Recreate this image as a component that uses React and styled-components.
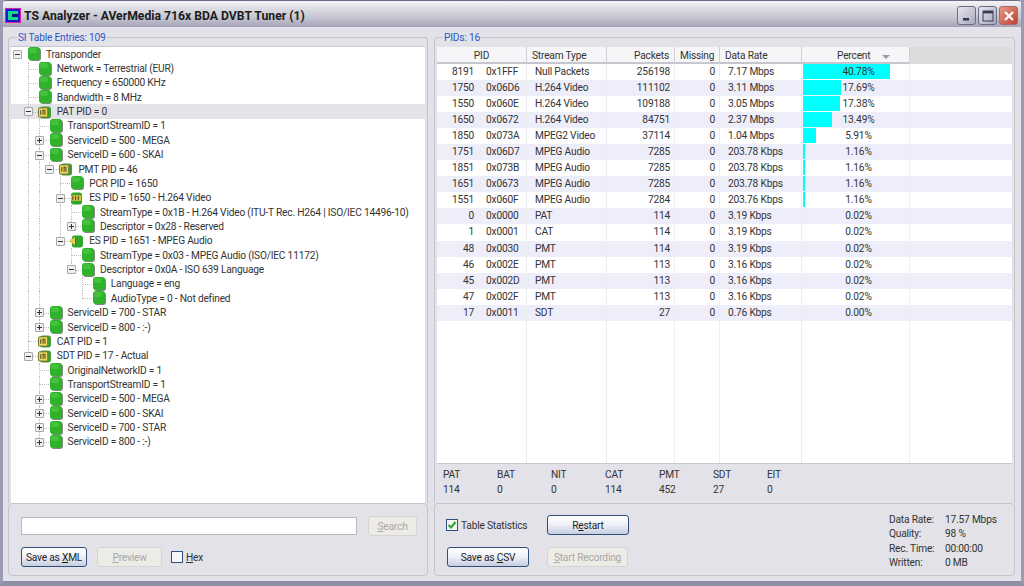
import styled, { createGlobalStyle } from 'styled-components'

const GlobalStyle = createGlobalStyle`
	html, body {
		margin: 0;
		padding: 0;
		background: #e2e2e8;
	}
	* {
		box-sizing: border-box;
	}
`

// level, icon, text, expander ('-', '+' or nothing)
const treeRows = [
	[0, 'green', 'Transponder', '-'],
	[1, 'green', 'Network = Terrestrial (EUR)'],
	[1, 'green', 'Frequency = 650000 KHz'],
	[1, 'green', 'Bandwidth = 8 MHz'],
	[1, 'table', 'PAT PID = 0', '-', 'selected'],
	[2, 'green', 'TransportStreamID = 1'],
	[2, 'green', 'ServiceID = 500 - MEGA', '+'],
	[2, 'green', 'ServiceID = 600 - SKAI', '-'],
	[3, 'table', 'PMT PID = 46', '-'],
	[4, 'green', 'PCR PID = 1650'],
	[4, 'video', 'ES PID = 1650 - H.264 Video', '-'],
	[5, 'green', 'StreamType = 0x1B - H.264 Video (ITU-T Rec. H264 | ISO/IEC 14496-10)'],
	[5, 'green', 'Descriptor = 0x28 - Reserved', '+'],
	[4, 'audio', 'ES PID = 1651 - MPEG Audio', '-'],
	[5, 'green', 'StreamType = 0x03 - MPEG Audio (ISO/IEC 11172)'],
	[5, 'green', 'Descriptor = 0x0A - ISO 639 Language', '-'],
	[6, 'green', 'Language = eng'],
	[6, 'green', 'AudioType = 0 - Not defined'],
	[2, 'green', 'ServiceID = 700 - STAR', '+'],
	[2, 'green', 'ServiceID = 800 - :-)', '+'],
	[1, 'table', 'CAT PID = 1'],
	[1, 'table', 'SDT PID = 17 - Actual', '-'],
	[2, 'green', 'OriginalNetworkID = 1'],
	[2, 'green', 'TransportStreamID = 1'],
	[2, 'green', 'ServiceID = 500 - MEGA', '+'],
	[2, 'green', 'ServiceID = 600 - SKAI', '+'],
	[2, 'green', 'ServiceID = 700 - STAR', '+'],
	[2, 'green', 'ServiceID = 800 - :-)', '+']
]

const pids = [
	[8191, '0x1FFF', 'Null Packets', 256198, '7.17 Mbps', 40.78],
	[1750, '0x06D6', 'H.264 Video', 111102, '3.11 Mbps', 17.69],
	[1550, '0x060E', 'H.264 Video', 109188, '3.05 Mbps', 17.38],
	[1650, '0x0672', 'H.264 Video', 84751, '2.37 Mbps', 13.49],
	[1850, '0x073A', 'MPEG2 Video', 37114, '1.04 Mbps', 5.91],
	[1751, '0x06D7', 'MPEG Audio', 7285, '203.78 Kbps', 1.16],
	[1851, '0x073B', 'MPEG Audio', 7285, '203.78 Kbps', 1.16],
	[1651, '0x0673', 'MPEG Audio', 7285, '203.78 Kbps', 1.16],
	[1551, '0x060F', 'MPEG Audio', 7284, '203.76 Kbps', 1.16],
	[0, '0x0000', 'PAT', 114, '3.19 Kbps', 0.02],
	[1, '0x0001', 'CAT', 114, '3.19 Kbps', 0.02],
	[48, '0x0030', 'PMT', 114, '3.19 Kbps', 0.02],
	[46, '0x002E', 'PMT', 113, '3.16 Kbps', 0.02],
	[45, '0x002D', 'PMT', 113, '3.16 Kbps', 0.02],
	[47, '0x002F', 'PMT', 113, '3.16 Kbps', 0.02],
	[17, '0x0011', 'SDT', 27, '0.76 Kbps', 0.0]
]

const tableStats = [
	['PAT', 114],
	['BAT', 0],
	['NIT', 0],
	['CAT', 114],
	['PMT', 452],
	['SDT', 27],
	['EIT', 0]
]

const summary = [
	['Data Rate:', '17.57 Mbps'],
	['Quality:', '98 %'],
	['Rec. Time:', '00:00:00'],
	['Written:', '0 MB']
]

const columns = '90px 80px 68px 45px 82px 108px 1fr'

const AppIcon = () => (
	<svg width="16" height="15" viewBox="0 0 16 15">
		<rect width="16" height="15" fill="#e020a0" />
		<rect x="1" y="1" width="14" height="13" fill="#1818d0" />
		<path d="M3 3h10v3H7v3h6v3H3z" fill="#14d890" />
		<rect x="7" y="6" width="6" height="3" fill="#101080" />
	</svg>
)

const GreenIcon = () => (
	<svg width="13" height="14" viewBox="0 0 13 14">
		<rect x="1" y="1" width="12" height="13" rx="3" fill="#7c8a78" />
		<rect x="0" y="0" width="12" height="13" rx="3" fill="#2fb32a" />
		<rect x="1" y="1" width="8" height="5" rx="2" fill="#45c23c" />
	</svg>
)

const TableIcon = () => (
	<svg width="14" height="14" viewBox="0 0 14 14">
		<rect x="2" y="1" width="12" height="13" rx="3" fill="#3f9f36" />
		<rect x="0.5" y="2.5" width="10" height="10" rx="1" fill="#ecd860" stroke="#6a6a30" />
		<path d="M3 5v5M5 5h2M5.5 5v5M7.5 5v5" stroke="#3a3418" strokeWidth="1" />
	</svg>
)

const VideoIcon = () => (
	<svg width="14" height="14" viewBox="0 0 14 14">
		<rect x="1" y="1" width="12" height="13" rx="3" fill="#2fa82a" />
		<rect x="1" y="4" width="11" height="6" fill="#d8c040" />
		<path d="M3 5v4M6 5v4M9 5v4" stroke="#5a4a20" strokeWidth="1.2" />
	</svg>
)

const AudioIcon = () => (
	<svg width="14" height="14" viewBox="0 0 14 14">
		<rect x="2" y="1" width="12" height="13" rx="3" fill="#2fa82a" />
		<path d="M0 5h2l4-3v10L2 9H0z" fill="#e4cc50" />
		<path d="M6 2v10" stroke="#6a5a20" />
	</svg>
)

const treeIcons = {
	green: GreenIcon,
	table: TableIcon,
	video: VideoIcon,
	audio: AudioIcon
}

// does another row at this level follow before the tree climbs above it
const hasLaterSibling = (index, level) => {
	for (let i = index + 1; i < treeRows.length; i++) {
		if (treeRows[i][0] < level) return false
		if (treeRows[i][0] === level) return true
	}
	return false
}

const TreeRow = ({ index, row }) => {
	const [level, icon, text, expander, selected] = row
	const Icon = treeIcons[icon]
	const guides = []
	for (let k = 1; k < level; k++) {
		if (hasLaterSibling(index, k)) guides.push(<Guide key={k} $level={k} />)
	}
	return (
		<Row $level={level} $selected={!!selected}>
			{guides}
			{level > 0 && <Guide $level={level} $half={!hasLaterSibling(index, level)} />}
			{level > 0 && <Stub $level={level} />}
			{expander && <Expander $level={level}>{expander === '+' ? <Plus /> : null}</Expander>}
			<IconSlot $shift={icon === 'green' ? 0 : -1}>
				<Icon />
			</IconSlot>
			<RowText>{text}</RowText>
		</Row>
	)
}

const App = () => {
	return (
		<Window>
			<GlobalStyle />
			<TitleBar>
				<AppIcon />
				<Title>TS Analyzer - AVerMedia 716x BDA DVBT Tuner (1)</Title>
				<WindowButtons>
					<WindowButton>
						<svg width="10" height="10" viewBox="0 0 10 10">
							<rect x="1" y="7" width="6" height="2.5" fill="#33384a" />
						</svg>
					</WindowButton>
					<WindowButton>
						<svg width="12" height="12" viewBox="0 0 12 12">
							<rect x="1" y="1" width="10" height="10" fill="none" stroke="#3a3f55" strokeWidth="1" />
							<rect x="1" y="1" width="10" height="2.4" fill="#3a3f55" />
						</svg>
					</WindowButton>
					<CloseButton>
						<svg width="12" height="12" viewBox="0 0 12 12">
							<path d="M2 2l8 8M10 2l-8 8" stroke="#fff" strokeWidth="2.2" />
						</svg>
					</CloseButton>
				</WindowButtons>
			</TitleBar>
			<Body>
				<Column>
					<Group>
						<Legend>SI Table Entries: 109</Legend>
						<TreeBox>
							{treeRows.map((row, i) => (
								<TreeRow key={i} index={i} row={row} />
							))}
						</TreeBox>
					</Group>
					<BottomPanel $stacked>
						<SearchRow>
							<SearchInput />
							<Button $width={49} disabled>
								<u>S</u>earch
							</Button>
						</SearchRow>
						<ActionRow>
							<Button $width={66} $default>
								Save as <u>X</u>ML
							</Button>
							<Button $width={65} disabled>
								<u>P</u>review
							</Button>
							<CheckLabel>
								<CheckBox />
								<span>
									<u>H</u>ex
								</span>
							</CheckLabel>
						</ActionRow>
					</BottomPanel>
				</Column>
				<Column>
					<Group>
						<Legend>PIDs: 16</Legend>
						<TableBox>
							<HeaderRow>
								<HeaderCell $align="center">PID</HeaderCell>
								<HeaderCell>Stream Type</HeaderCell>
								<HeaderCell $align="right">Packets</HeaderCell>
								<HeaderCell $align="center">Missing</HeaderCell>
								<HeaderCell>Data Rate</HeaderCell>
								<PercentHeader>
									Percent
									<SortArrow />
								</PercentHeader>
								<HeaderFiller />
							</HeaderRow>
							{pids.map((pid, i) => (
								<DataRow key={pid[0]} $odd={i % 2 === 1}>
									<PidCell>
										<PidNumber>{pid[0]}</PidNumber>
										<span>{pid[1]}</span>
									</PidCell>
									<Cell>{pid[2]}</Cell>
									<Cell $align="right">{pid[3]}</Cell>
									<Cell $align="right">0</Cell>
									<Cell>{pid[4]}</Cell>
									<PercentCell>
										<PercentBar style={{ width: `${pid[5] * 2.13}px` }} />
										<PercentText>{pid[5].toFixed(2)}%</PercentText>
									</PercentCell>
								</DataRow>
							))}
							<FillerRow>
								<i />
								<i />
								<i />
								<i />
								<i />
								<i />
							</FillerRow>
						</TableBox>
						<StatsRow>
							{tableStats.map(([name, value]) => (
								<Stat key={name}>
									<div>{name}</div>
									<div>{value}</div>
								</Stat>
							))}
						</StatsRow>
					</Group>
					<BottomPanel>
						<ControlsGrid>
							<CheckLabel>
								<CheckBox $checked>
									<svg width="10" height="10" viewBox="0 0 10 10">
										<path d="M1.5 5l2.5 2.5L8.5 2" fill="none" stroke="#22a82a" strokeWidth="2" />
									</svg>
								</CheckBox>
								<span>Table Statistics</span>
							</CheckLabel>
							<Button $width={82} $default>
								R<u>e</u>start
							</Button>
							<Button $width={82} $default>
								Save as <u>C</u>SV
							</Button>
							<Button $width={81} disabled>
								<u>S</u>tart Recording
							</Button>
						</ControlsGrid>
						<Summary>
							{summary.map(([label, value]) => (
								<SummaryRow key={label}>
									<span>{label}</span>
									<span>{value}</span>
								</SummaryRow>
							))}
						</Summary>
					</BottomPanel>
				</Column>
			</Body>
		</Window>
	)
}

export default App

const uiFont = `Roboto, 'Liberation Sans', Arial, sans-serif`

const Window = styled.div`
	width: 1024px;
	height: 586px;
	display: flex;
	flex-direction: column;
	overflow: hidden;
	background: #e2e2e8;
	border: 3px solid #9a9ab2;
	border-top: 0;
	border-bottom: 5px solid #8f8fa8;
	font-family: ${uiFont};
	font-size: 10.2px;
	letter-spacing: -0.2px;
	color: #2a2a2a;
`

const TitleBar = styled.div`
	height: 27px;
	flex: none;
	margin: 0 -3px;
	padding: 6px 6px 3px 5px;
	display: flex;
	align-items: center;
	gap: 3px;
	border-top: 1px solid #6c6c86;
	background: linear-gradient(#f4f4f8 0%, #dcdce4 30%, #c8c8d4 60%, #a4a4b8 100%);
	border-radius: 6px 6px 0 0;
`

const Title = styled.div`
	flex: 1;
	font-weight: bold;
	font-size: 12.2px;
	letter-spacing: 0;
	color: #1c1c1c;
`

const WindowButtons = styled.div`
	display: flex;
	gap: 2px;
`

const WindowButton = styled.div`
	width: 19px;
	height: 19px;
	display: flex;
	align-items: center;
	justify-content: center;
	border: 1px solid #6a6a80;
	border-radius: 3px;
	background: linear-gradient(135deg, #e8e8f0, #a8a8bc);
`

const CloseButton = styled(WindowButton)`
	border-color: #a86a68;
	background: linear-gradient(135deg, #e89a88, #c04030);
`

const Body = styled.div`
	flex: 1;
	min-height: 0;
	display: grid;
	grid-template-columns: 420px 581px;
	gap: 6px;
	padding: 4px 0 5px 5px;
`

const Column = styled.div`
	display: flex;
	flex-direction: column;
	min-height: 0;
	min-width: 0;
`

const Group = styled.fieldset`
	flex: 1;
	min-height: 0;
	min-width: 0;
	margin: 0;
	padding: 0 2px 0 2px;
	display: flex;
	flex-direction: column;
	border: 1px solid #c4c4cc;
	border-bottom: 0;
	border-radius: 4px 4px 0 0;
`

const Legend = styled.legend`
	margin-left: 6px;
	padding: 0 1px;
	color: #2f55c8;
	line-height: 13px;
`

const TreeBox = styled.div`
	flex: 1;
	min-height: 0;
	background: #fff;
	border-top: 1px solid #c8c8d0;
	overflow: hidden;
	margin-top: 2px;
`

const Row = styled.div`
	position: relative;
	height: 14.37px;
	display: flex;
	align-items: center;
	padding-left: ${(props) => 17 + props.$level * 10.8}px;
	background: ${(props) => (props.$selected ? '#e4e4e8' : 'transparent')};
	white-space: nowrap;
`

const IconSlot = styled.span`
	width: 13px;
	flex: none;
	display: flex;
	margin-left: ${(props) => props.$shift}px;
	margin-right: ${(props) => -props.$shift}px;
	position: relative;
`

const Guide = styled.i`
	position: absolute;
	left: ${(props) => 6 + props.$level * 10.8}px;
	top: 0;
	height: ${(props) => (props.$half ? '50%' : '100%')};
	border-left: 1px dotted #c0c0c4;
`

const Stub = styled.i`
	position: absolute;
	left: ${(props) => 6 + props.$level * 10.8}px;
	top: 50%;
	width: 10px;
	border-top: 1px dotted #c0c0c4;
`

const Expander = styled.span`
	position: absolute;
	left: ${(props) => 2 + props.$level * 10.8}px;
	top: 3px;
	width: 9px;
	height: 9px;
	background: #f0f0f0;
	border: 1px solid #a8a8a8;
	border-radius: 1px;
	z-index: 1;
	&::before {
		content: '';
		position: absolute;
		left: 1px;
		right: 1px;
		top: 3px;
		height: 1px;
		background: #333;
	}
`

const Plus = styled.i`
	position: absolute;
	top: 1px;
	bottom: 1px;
	left: 3px;
	width: 1px;
	background: #333;
`

const RowText = styled.span`
	margin-left: 5px;
	color: #333;
`

const BottomPanel = styled.div`
	height: 73px;
	flex: none;
	display: flex;
	flex-direction: ${(props) => (props.$stacked ? 'column' : 'row')};
	gap: ${(props) => (props.$stacked ? '11px' : '0')};
	padding: ${(props) => (props.$stacked ? '12px 0 0 12px' : '0')};
	border: 1px solid #c4c4cc;
	border-radius: 4px;
	background: #e2e2e8;
`

const SearchRow = styled.div`
	display: flex;
	gap: 11px;
	align-items: center;
`

const ActionRow = styled.div`
	display: flex;
	gap: 10px;
	align-items: center;
`

const SearchInput = styled.input`
	width: 336px;
	height: 18px;
	border: 1px solid #b8b8be;
	background: #fff;
`

const Button = styled.button`
	width: ${(props) => props.$width}px;
	height: 20px;
	padding: 0;
	font-family: ${uiFont};
	font-size: 10.2px;
	letter-spacing: -0.2px;
	border-radius: 3px;
	color: ${(props) => (props.disabled ? '#a8a8a8' : '#1c1c1c')};
	border: 1px solid ${(props) => (props.disabled ? '#d4d4d4' : '#2f4f7f')};
	background: ${(props) =>
		props.disabled
			? '#ecebe6'
			: 'linear-gradient(#ffffff 0%, #eef0f6 50%, #c6cde0 100%)'};
	white-space: nowrap;
`

const CheckLabel = styled.label`
	display: flex;
	align-items: center;
	gap: 3px;
	margin-left: -1px;
	color: #333;
	white-space: nowrap;
`

const CheckBox = styled.span`
	width: 12px;
	height: 12px;
	flex: none;
	display: flex;
	align-items: center;
	justify-content: center;
	background: #f6f6f8;
	border: 1px solid #2f4f7f;
`

const TableBox = styled.div`
	height: 416px;
	flex: none;
	display: flex;
	flex-direction: column;
	background: #fff;
	margin-top: 3px;
`

const HeaderRow = styled.div`
	height: 17px;
	flex: none;
	display: grid;
	grid-template-columns: ${columns};
	border-bottom: 2px solid #c6c6ce;
	background: #f6f6f8;
`

const HeaderCell = styled.div`
	padding: 0 5px;
	text-align: ${(props) => props.$align || 'left'};
	line-height: 17px;
	border-right: 1px solid #cfcfd4;
	color: #333;
`

const PercentHeader = styled(HeaderCell)`
	padding-left: 35px;
`

const HeaderFiller = styled.div`
	background: #dcdcdc;
`

const SortArrow = styled.i`
	display: inline-block;
	margin-left: 12px;
	border-left: 4px solid transparent;
	border-right: 4px solid transparent;
	border-top: 4px solid #9a9aa0;
`

const DataRow = styled.div`
	height: 16.05px;
	flex: none;
	display: grid;
	grid-template-columns: ${columns};
	background: ${(props) => (props.$odd ? '#eeeefa' : '#fff')};
	line-height: 16px;
	color: #333;
`

const Cell = styled.div`
	padding: 0 4px 0 8px;
	text-align: ${(props) => props.$align || 'left'};
	border-right: 1px solid #eeeef0;
	white-space: nowrap;
`

const PidCell = styled(Cell)`
	display: flex;
	padding-left: 0;
`

const PidNumber = styled.span`
	width: 37px;
	margin-right: 12px;
	text-align: right;
`

const PercentCell = styled.div`
	position: relative;
	padding-left: 1px;
	border-right: 1px solid #eeeef0;
`

const PercentBar = styled.div`
	height: 15px;
	background: #00ffff;
`

const PercentText = styled.span`
	position: absolute;
	left: 0;
	right: 0;
	top: 0;
	padding-left: 6px;
	text-align: center;
`

const FillerRow = styled.div`
	flex: 1;
	display: grid;
	grid-template-columns: ${columns};
	i {
		border-right: 1px solid #eeeef0;
	}
`

const StatsRow = styled.div`
	flex: 1;
	display: grid;
	grid-template-columns: repeat(7, 54px);
	padding: 3px 0 0 6px;
	border-top: 1px solid #c8c8d0;
	color: #333;
	line-height: 15px;
`

const Stat = styled.div`
	display: flex;
	flex-direction: column;
`

const ControlsGrid = styled.div`
	display: grid;
	grid-template-columns: 82px 82px;
	grid-template-rows: 20px 20px;
	column-gap: 18px;
	row-gap: 12px;
	margin: 11px 0 0 12px;
	align-items: center;
`

const Summary = styled.div`
	margin: 9px 0 0 auto;
	padding-right: 6px;
	color: #333;
`

const SummaryRow = styled.div`
	display: grid;
	grid-template-columns: 56px auto;
	height: 14.3px;
	line-height: 14px;
	width: 119px;
`
